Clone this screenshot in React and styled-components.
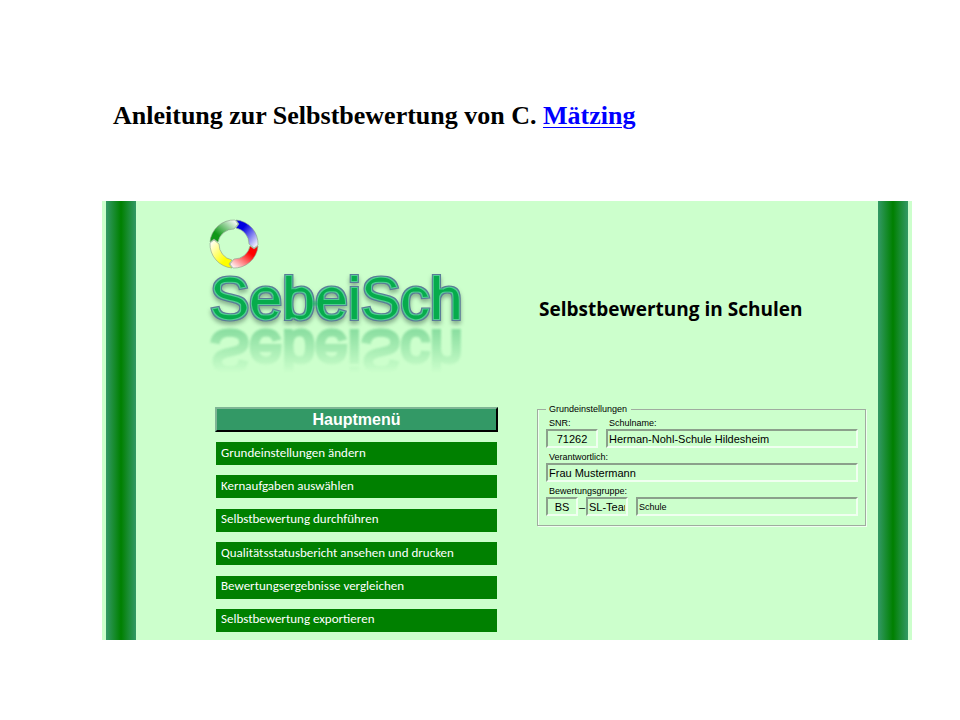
import React from "react";
import styled, { createGlobalStyle } from "styled-components";

const GlobalStyle = createGlobalStyle`
  * {
    box-sizing: border-box;
  }
  body {
    margin: 0;
    background-color: #fff;
    font-family: "Liberation Sans", Arial, sans-serif;
  }
`;

const Page = styled.main`
  padding: 101px 48px 80px 102px;
`;
const Title = styled.h1`
  margin: 0 0 70px;
  padding-left: 11px;
  font-family: Garamond, "Liberation Serif", serif;
  font-size: 26px;
  line-height: 30px;
  font-weight: bold;
  color: #000;
  a {
    color: #0000ff;
    text-decoration-thickness: 1px;
    text-underline-offset: 3px;
  }
`;
const Panel = styled.section`
  display: flex;
  padding: 0 4px;
  background-color: #ccffcc;
`;
const Pillar = styled.div`
  flex: 0 0 30px;
  background: linear-gradient(to right, #339966, #008000 50%, #339966);
`;
const Content = styled.div`
  flex: 1;
  display: grid;
  grid-template-columns: 283fr 329fr;
  column-gap: 39px;
  padding: 16px 12px 8px 79px;
`;
const LogoArea = styled.div`
  height: 190px;
  svg {
    display: block;
    margin-left: -8px;
    overflow: visible;
  }
`;
const Slogan = styled.h2`
  margin: 0;
  padding: 78px 0 0 2px;
  font-family: "Comic Sans MS", "Open Sans", sans-serif;
  font-size: 19px;
  line-height: 28px;
  font-weight: bold;
  color: #000;
  white-space: nowrap;
`;

const MenuTitle = styled.h3`
  margin: 0 0 10px;
  padding-top: 1px;
  border: 2px solid;
  border-color: #7fb595 #000 #000 #7fb595;
  background-color: #339966;
  color: #fff;
  font-size: 16px;
  line-height: 20px;
  text-align: center;
`;
const MenuList = styled.ul`
  display: flex;
  flex-direction: column;
  justify-content: space-between;
  min-height: 190px;
  margin: 0;
  padding: 0 1px;
  list-style: none;
`;
const MenuButton = styled.button`
  display: block;
  width: 100%;
  height: 23px;
  padding: 0 5px 2px;
  border: 0;
  background-color: #008000;
  color: #fff;
  font-family: Calibri, "Open Sans", sans-serif;
  font-size: 13px;
  line-height: 20px;
  text-align: left;
  cursor: pointer;
`;

const Settings = styled.fieldset`
  align-self: start;
  min-width: 0;
  margin: -2px 0 0;
  padding: 3px 7px 9px 8px;
  border: 1px solid #a0aca0;
  box-shadow: 1px 1px 0 #f0fff0, inset 1px 0 0 #f0fff0;
  legend {
    padding: 0 4px 0 3px;
    font-size: 9px;
    line-height: 9px;
  }
`;
const FieldRow = styled.div`
  display: flex;
  align-items: flex-end;
  gap: 8px;
  margin-bottom: ${(props) => (props.$last ? 0 : 3)}px;
`;
const Field = styled.div`
  flex: ${(props) => (props.$width ? `0 0 ${props.$width}px` : "1")};
  min-width: 0;
  label {
    display: block;
    padding-left: 3px;
    font-size: 9px;
    line-height: 12px;
    white-space: nowrap;
  }
  input {
    display: block;
    width: 100%;
    height: 19px;
    padding: 0 1px;
    border: 2px solid;
    border-color: #8ba08b #f0fff0 #f0fff0 #8ba08b;
    border-radius: 0;
    background-color: #ccffcc;
    color: #000;
    font-family: inherit;
    font-size: ${(props) => (props.$small ? 9 : 11)}px;
    text-align: ${(props) => (props.$center ? "center" : "left")};
  }
`;
const Dash = styled.span`
  flex: 0 0 8px;
  margin: 0 -8px;
  font-size: 11px;
  line-height: 18px;
  text-align: center;
`;

const menuItems = [
  "Grundeinstellungen ändern",
  "Kernaufgaben auswählen",
  "Selbstbewertung durchführen",
  "Qualitätsstatusbericht ansehen und drucken",
  "Bewertungsergebnisse vergleichen",
  "Selbstbewertung exportieren"
];

const ringParts = [
  { id: "blue", color: "#0000e0", angle: 0 },
  { id: "red", color: "#ff0000", angle: 90 },
  { id: "yellow", color: "#ffff00", angle: 180 },
  { id: "green", color: "#109818", angle: 270 }
];

const Logo = () => (
  <svg width="270" height="170" viewBox="0 0 270 170" role="img" aria-label="SebeiSch">
    <defs>
      {ringParts.map((part) => (
        <linearGradient key={part.id} id={part.id} x1="0" y1="0" x2="1" y2="1">
          <stop offset="0.3" stopColor={part.color} />
          <stop offset="0.95" stopColor="#fff" />
        </linearGradient>
      ))}
      <linearGradient id="fade" x1="0" y1="0" x2="0" y2="1">
        <stop offset="0" stopColor="#fff" stopOpacity="0.4" />
        <stop offset="1" stopColor="#fff" stopOpacity="0" />
      </linearGradient>
      <mask id="fadeMask" maskUnits="userSpaceOnUse" x="0" y="108" width="270" height="54">
        <rect x="0" y="108" width="270" height="48" fill="url(#fade)" />
      </mask>
      <filter id="bevel" x="-5%" y="-10%" width="110%" height="130%" colorInterpolationFilters="sRGB">
        <feGaussianBlur in="SourceAlpha" stdDeviation="0.3" result="wide" />
        <feFlood floodColor="#5a7a98" />
        <feComposite in2="wide" operator="in" result="outline" />
        <feMorphology in="SourceAlpha" operator="erode" radius="1" result="thin" />
        <feFlood floodColor="#52cc92" />
        <feComposite in2="thin" operator="in" result="light" />
        <feMorphology in="SourceAlpha" operator="erode" radius="2" result="core" />
        <feGaussianBlur in="core" stdDeviation="0.3" result="coreSoft" />
        <feFlood floodColor="#06ac4c" />
        <feComposite in2="coreSoft" operator="in" result="inner" />
        <feGaussianBlur in="SourceAlpha" stdDeviation="2" />
        <feOffset dy="3" result="blurred" />
        <feFlood floodColor="#305040" floodOpacity="0.45" />
        <feComposite in2="blurred" operator="in" result="shadow" />
        <feMerge>
          <feMergeNode in="shadow" />
          <feMergeNode in="outline" />
          <feMergeNode in="light" />
          <feMergeNode in="inner" />
        </feMerge>
      </filter>
      <filter id="soft">
        <feGaussianBlur stdDeviation="0.8" />
      </filter>
    </defs>
    <g transform="translate(27 27)">
      {ringParts.map((part) => (
        <path
          key={part.id}
          d="M2 -24 A24 24 0 0 1 24 1 L20 4 L15 0 A16 16 0 0 0 2 -16 L5 -20 Z"
          transform={`rotate(${part.angle})`}
          fill={`url(#${part.id})`}
          stroke="#8a9a8a"
          strokeWidth="0.6"
        />
      ))}
    </g>
    <g filter="url(#bevel)">
      <text
        id="wordmark"
        x="3"
        y="102"
        fontFamily="Liberation Sans, Arial, sans-serif"
        fontSize="59"
        fill="#14a352"
        stroke="#14a352"
        strokeWidth="4"
      >
        SebeiSch
      </text>
    </g>
    <g mask="url(#fadeMask)">
      <g transform="translate(0 216) scale(1 -1)" filter="url(#soft)" aria-hidden="true">
        <use href="#wordmark" />
      </g>
    </g>
  </svg>
);

const TextField = ({ id, label, value, ...rest }) => (
  <Field {...rest}>
    {label && <label htmlFor={id}>{label}</label>}
    <input id={id} type="text" defaultValue={value} aria-label={label ? undefined : id} />
  </Field>
);

const App = () => {
  return (
    <Page>
      <GlobalStyle />
      <Title>
        Anleitung zur Selbstbewertung von C. <a href="#maetzing">Mätzing</a>
      </Title>
      <Panel>
        <Pillar />
        <Content>
          <LogoArea>
            <Logo />
          </LogoArea>
          <Slogan>Selbstbewertung in Schulen</Slogan>
          <nav>
            <MenuTitle>Hauptmenü</MenuTitle>
            <MenuList>
              {menuItems.map((item) => (
                <li key={item}>
                  <MenuButton type="button">{item}</MenuButton>
                </li>
              ))}
            </MenuList>
          </nav>
          <Settings>
            <legend>Grundeinstellungen</legend>
            <FieldRow>
              <TextField id="snr" label="SNR:" value="71262" $width={52} $center />
              <TextField id="schulname" label="Schulname:" value="Herman-Nohl-Schule Hildesheim" />
            </FieldRow>
            <FieldRow>
              <TextField id="verantwortlich" label="Verantwortlich:" value="Frau Mustermann" />
            </FieldRow>
            <FieldRow $last>
              <TextField id="gruppe" label="Bewertungsgruppe:" value="BS" $width={32} $center />
              <Dash>–</Dash>
              <TextField id="team" value="SL-Team" $width={42} />
              <TextField id="bereich" value="Schule" $small />
            </FieldRow>
          </Settings>
        </Content>
        <Pillar />
      </Panel>
    </Page>
  );
};

export default App;
